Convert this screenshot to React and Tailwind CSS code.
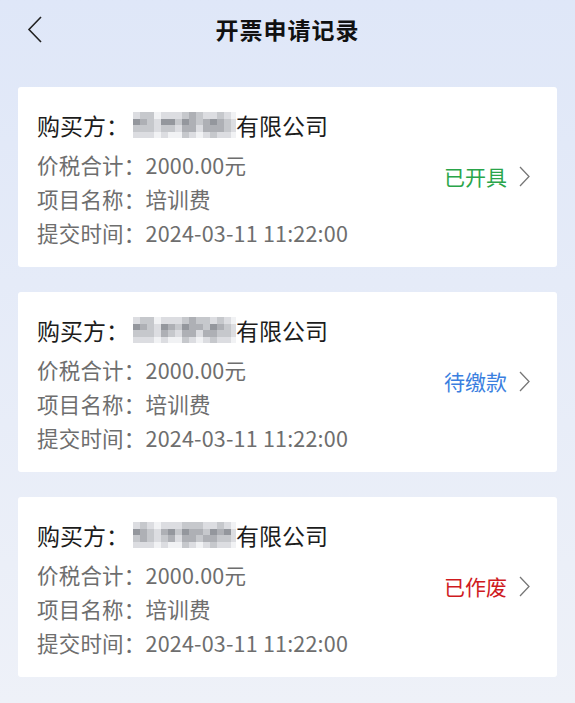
import React from 'react';

const font = { fontFamily: '"Noto Sans CJK SC", "Noto Sans", sans-serif' };

// mosaic cells for the masked company name (4 rows x 15 cols)
const shades = [
  'bg-[#f1f2f4]', 'bg-[#dcdde1]', 'bg-[#c6c8cc]', 'bg-[#aeb0b5]', 'bg-[#94979d]', 'bg-[#7e8187]',
];

const mosaics = [
  [
    [1, 2, 2, 0, 1, 1, 1, 2, 3, 2, 1, 1, 2, 1, 0],
    [4, 3, 2, 1, 4, 4, 2, 4, 3, 2, 3, 4, 3, 2, 1],
    [2, 2, 2, 1, 2, 2, 1, 3, 3, 1, 3, 3, 3, 2, 1],
    [1, 1, 1, 0, 1, 0, 0, 2, 1, 0, 1, 2, 1, 1, 0],
  ],
  [
    [1, 2, 2, 0, 1, 1, 1, 2, 3, 2, 2, 1, 2, 1, 0],
    [4, 3, 2, 1, 4, 3, 2, 4, 3, 3, 2, 4, 3, 2, 1],
    [2, 2, 2, 1, 3, 2, 1, 3, 3, 1, 3, 3, 2, 2, 1],
    [1, 1, 1, 0, 1, 0, 0, 2, 1, 0, 1, 2, 1, 1, 0],
  ],
  [
    [1, 2, 1, 0, 1, 1, 1, 2, 2, 2, 1, 1, 2, 1, 0],
    [4, 3, 2, 1, 3, 4, 2, 4, 3, 3, 2, 4, 3, 4, 1],
    [2, 3, 2, 1, 2, 3, 1, 3, 3, 2, 3, 3, 2, 2, 1],
    [1, 1, 1, 0, 1, 0, 0, 2, 1, 0, 1, 2, 1, 1, 0],
  ],
];

const records = [
  { status: '已开具', color: 'text-[#2aa54a]' },
  { status: '待缴款', color: 'text-[#3b7fe0]' },
  { status: '已作废', color: 'text-[#cf1b1f]' },
];

const Mosaic = ({ grid }) => (
  <span className="inline-flex flex-col ml-[4px] w-[103px] h-[26px] overflow-hidden">
    {grid.map((row, r) => (
      <span key={r} className="flex h-[6.5px]">
        {row.map((v, c) => (
          <span key={c} className={`w-[7px] h-full shrink-0 ${shades[v]}`} />
        ))}
      </span>
    ))}
  </span>
);

const Chevron = ({ className, w = 14, h = 22, stroke = 1.4 }) => (
  <svg width={w} height={h} viewBox={`0 0 ${w} ${h}`} className={className} fill="none">
    <path d={`M2 1 L${w - 2} ${h / 2} L2 ${h - 1}`} stroke="currentColor" strokeWidth={stroke} strokeLinejoin="miter" />
  </svg>
);

const RecordCard = ({ record, grid }) => (
  <div className="bg-white rounded-[3px] pl-[19px] pr-[26px] pt-[22px] pb-[17px] flex items-center">
    <div className="flex-1">
      <div className="flex items-center h-[32px] text-[23px] text-[#1c1c1c]">
        <span>购买方：</span>
        <Mosaic grid={grid} />
        <span>有限公司</span>
      </div>
      <div className="mt-[7px] text-[21.5px] leading-[34px] text-[#6e6e6e] tracking-[0.2px]">
        <p>价税合计：2000.00元</p>
        <p>项目名称：培训费</p>
        <p>提交时间：2024-03-11 11:22:00</p>
      </div>
    </div>
    <div className="flex items-center gap-[11px] -mt-[6px]">
      <span className={`text-[21px] ${record.color}`}>{record.status}</span>
      <Chevron className="text-[#777]" w={13} h={21} stroke={1.3} />
    </div>
  </div>
);

export default function App() {
  return (
    <div style={font} className="min-h-[703px] w-full bg-gradient-to-b from-[#dfe7f8] to-[#eef1f8] px-[18px] pb-[26px]">
      <header className="relative h-[58px] flex items-center justify-center">
        <button className="absolute left-[9px] top-[16px] text-[#222]">
          <Chevron className="rotate-180" w={16} h={27} stroke={1.6} />
        </button>
        <h1 className="text-[23px] font-bold text-[#111] tracking-[1px]">开票申请记录</h1>
      </header>
      <div className="mt-[29px] flex flex-col gap-[25px]">
        {records.map((r, i) => (
          <RecordCard key={i} record={r} grid={mosaics[i]} />
        ))}
      </div>
    </div>
  );
}
